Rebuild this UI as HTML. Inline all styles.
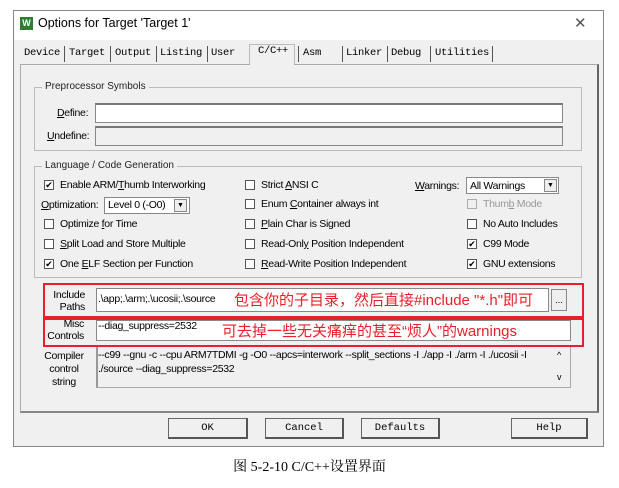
<!DOCTYPE html><html><head><meta charset="utf-8"><style>
*{margin:0;padding:0;box-sizing:border-box}
body{width:619px;height:488px;background:#fff;position:relative;overflow:hidden;font-family:"Liberation Sans","Noto Sans CJK SC",sans-serif;font-size:10.5px;color:#000}
.a{position:absolute}
.dlg{left:13px;top:10px;width:591px;height:437px;border:1px solid #888;background:#f0f0f0}
.tb{left:14px;top:11px;width:589px;height:29px;background:#fff}
.tab{top:47px;font-family:"Liberation Mono",monospace;font-size:10.5px;letter-spacing:-0.3px}
.sep{top:46px;width:1px;height:16px;background:#555}
.panel{left:20px;top:64px;width:579px;height:349px;border:1px solid #aaa;border-right:2px solid #666;border-bottom:2px solid #888;background:#f0f0f0}
.grp{border:1px solid #bbb}
.gl{background:#f0f0f0;padding:0 3px;font-size:10px;color:#222}
.fld{background:#fff;border:1px solid #888;border-top:2px solid #777}
.dis{background:#f0f0f0}
.cb{width:10px;height:10px;border:1px solid #555;background:#fff;font-size:9px;line-height:8px;text-align:center}
.lb{font-size:10.5px;letter-spacing:-0.3px}
.btn{top:418px;height:21px;border:1px solid #666;border-right:2px solid #555;border-bottom:2px solid #555;background:#f0f0f0;font-family:"Liberation Mono",monospace;font-size:10.5px;text-align:center;line-height:18px}
.red{border:2px solid #e8202a}
.rt{color:#e8202a;font-size:15px}
</style></head><body>
<div class="a dlg"></div>
<div class="a tb"></div>
<div class="a" style="left:20px;top:17px;width:13px;height:13px;background:#2e7d32;color:#fff;font-size:9px;font-weight:bold;text-align:center;line-height:13px">W</div>
<div class="a" style="left:38px;top:16px;font-size:12.5px">Options for Target 'Target 1'</div>
<div class="a" style="left:574px;top:14px;font-size:15px;color:#555">✕</div>
<div class="a" style="left:249px;top:44px;width:46px;height:22px;background:#f0f0f0;border:1px solid #bbb;border-bottom:none"></div>
<div class="a panel"></div>
<div class="a" style="left:250px;top:62px;width:44px;height:4px;background:#f0f0f0"></div>
<span class="a tab" style="left:24px">Device</span><span class="a sep" style="left:64px"></span>
<span class="a tab" style="left:69px">Target</span><span class="a sep" style="left:110px"></span>
<span class="a tab" style="left:115px">Output</span><span class="a sep" style="left:156px"></span>
<span class="a tab" style="left:160px">Listing</span><span class="a sep" style="left:207px"></span>
<span class="a tab" style="left:211px">User</span>
<span class="a tab" style="left:258px;top:45px">C/C++</span><span class="a sep" style="left:298px"></span>
<span class="a tab" style="left:303px">Asm</span><span class="a sep" style="left:342px"></span>
<span class="a tab" style="left:346px">Linker</span><span class="a sep" style="left:387px"></span>
<span class="a tab" style="left:391px">Debug</span><span class="a sep" style="left:430px"></span>
<span class="a tab" style="left:435px">Utilities</span><span class="a sep" style="left:492px"></span>

<div class="a grp" style="left:34px;top:87px;width:548px;height:64px"></div>
<span class="a gl" style="left:42px;top:81px">Preprocessor Symbols</span>
<span class="a lb" style="left:57px;top:107px"><u>D</u>efine:</span>
<div class="a fld" style="left:95px;top:103px;width:468px;height:20px"></div>
<span class="a lb" style="left:47px;top:130px"><u>U</u>ndefine:</span>
<div class="a fld dis" style="left:95px;top:126px;width:468px;height:20px"></div>

<div class="a grp" style="left:34px;top:166px;width:548px;height:112px"></div>
<span class="a gl" style="left:42px;top:160px">Language / Code Generation</span>

<div class="a cb" style="left:44px;top:180px">✔</div><span class="a lb" style="left:60px;top:179px">Enable ARM/<u>T</u>humb Interworking</span>
<span class="a lb" style="left:41px;top:199px"><u>O</u>ptimization:</span>
<div class="a fld" style="left:104px;top:197px;width:86px;height:17px;border-top:1px solid #888"></div><span class="a lb" style="left:108px;top:199px">Level 0 (-O0)</span>
<div class="a" style="left:174px;top:199px;width:13px;height:13px;background:#eee;border:1px solid #888;font-size:7px;text-align:center;line-height:12px">▼</div>
<div class="a cb" style="left:44px;top:219px"></div><span class="a lb" style="left:60px;top:218px">Optimize <u>f</u>or Time</span>
<div class="a cb" style="left:44px;top:239px"></div><span class="a lb" style="left:60px;top:238px"><u>S</u>plit Load and Store Multiple</span>
<div class="a cb" style="left:44px;top:259px">✔</div><span class="a lb" style="left:60px;top:258px">One <u>E</u>LF Section per Function</span>

<div class="a cb" style="left:245px;top:180px"></div><span class="a lb" style="left:261px;top:179px">Strict <u>A</u>NSI C</span>
<div class="a cb" style="left:245px;top:199px"></div><span class="a lb" style="left:261px;top:198px">Enum <u>C</u>ontainer always int</span>
<div class="a cb" style="left:245px;top:219px"></div><span class="a lb" style="left:261px;top:218px"><u>P</u>lain Char is Signed</span>
<div class="a cb" style="left:245px;top:239px"></div><span class="a lb" style="left:261px;top:238px">Read-Onl<u>y</u> Position Independent</span>
<div class="a cb" style="left:245px;top:259px"></div><span class="a lb" style="left:261px;top:258px"><u>R</u>ead-Write Position Independent</span>

<span class="a lb" style="left:415px;top:180px"><u>W</u>arnings:</span>
<div class="a fld" style="left:466px;top:177px;width:93px;height:17px;border-top:1px solid #888"></div><span class="a lb" style="left:470px;top:180px">All Warnings</span>
<div class="a" style="left:544px;top:179px;width:13px;height:13px;background:#eee;border:1px solid #888;font-size:7px;text-align:center;line-height:12px">▼</div>
<div class="a cb" style="left:467px;top:199px;border-color:#aaa;background:#f0f0f0"></div><span class="a lb" style="left:483px;top:198px;color:#999">Thum<u>b</u> Mode</span>
<div class="a cb" style="left:467px;top:219px"></div><span class="a lb" style="left:483px;top:218px">No Auto Includes</span>
<div class="a cb" style="left:467px;top:239px">✔</div><span class="a lb" style="left:483px;top:238px">C99 Mode</span>
<div class="a cb" style="left:467px;top:259px">✔</div><span class="a lb" style="left:483px;top:258px">GNU extensions</span>

<span class="a lb" style="left:51px;top:289px;text-align:right;width:34px;line-height:12px">Include<br>Paths</span>
<div class="a fld" style="left:96px;top:288px;width:453px;height:24px;border-top:1px solid #888"></div>
<span class="a lb" style="left:98px;top:293px">.\app;.\arm;.\ucosii;.\source</span>
<div class="a" style="left:551px;top:289px;width:16px;height:22px;border:1px solid #888;background:#eee;font-size:9px;text-align:center;line-height:20px">...</div>
<span class="a lb" style="left:46px;top:318px;text-align:right;width:38px;line-height:12px">Misc<br>Controls</span>
<div class="a fld" style="left:96px;top:320px;width:475px;height:21px;border-top:1px solid #888"></div>
<span class="a lb" style="left:98px;top:320px">--diag_suppress=2532</span>
<span class="a lb" style="left:44px;top:350px;text-align:center;width:40px;line-height:13px">Compiler<br>control<br>string</span>
<div class="a" style="left:96px;top:346px;width:475px;height:42px;border:1px solid #aaa;border-left:2px solid #999"></div>
<span class="a lb" style="left:98px;top:348px;line-height:14px;width:450px">--c99 --gnu -c --cpu ARM7TDMI -g -O0 --apcs=interwork --split_sections -I ./app -I ./arm -I ./ucosii -I ./source --diag_suppress=2532</span>
<span class="a" style="left:557px;top:350px;font-size:9px">^</span><span class="a" style="left:557px;top:372px;font-size:9px">v</span>

<div class="a red" style="left:43px;top:283px;width:541px;height:35px"></div>
<div class="a red" style="left:43px;top:318px;width:541px;height:29px"></div>
<span class="a rt" style="left:234px;top:289px">包含你的子目录，然后直接#include "*.h"即可</span>
<span class="a rt" style="left:222px;top:320px">可去掉一些无关痛痒的甚至“烦人”的warnings</span>

<div class="a btn" style="left:168px;width:80px">OK</div>
<div class="a btn" style="left:265px;width:79px">Cancel</div>
<div class="a btn" style="left:361px;width:79px">Defaults</div>
<div class="a btn" style="left:511px;width:77px">Help</div>

<div class="a" style="left:0;top:456px;width:619px;text-align:center;font-family:'Liberation Serif','Noto Serif CJK SC',serif;font-size:14px">图 5-2-10 C/C++设置界面</div>
</body></html>
